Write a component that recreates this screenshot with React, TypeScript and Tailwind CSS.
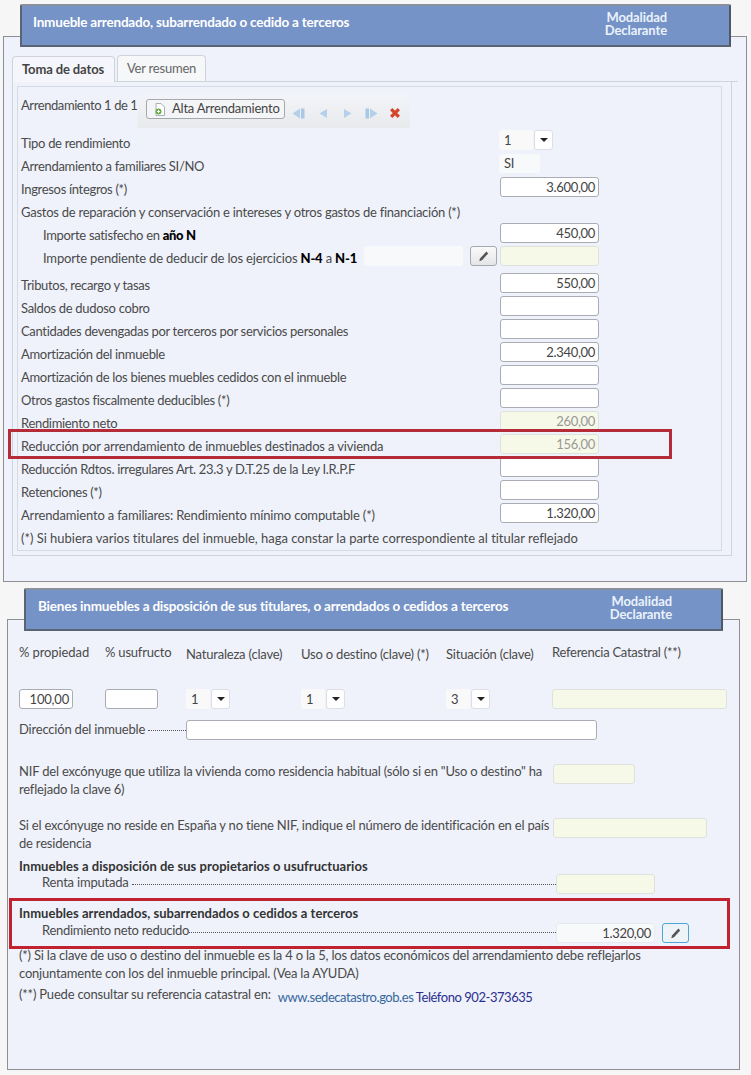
import React from "react";

const F = "font-['Lato','Noto_Sans',sans-serif]";

function Money({ v, tone = "white", w = "w-[99px]" }: { v?: string; tone?: "white" | "yellow" | "ro"; w?: string }) {
  const cls =
    tone === "white"
      ? "bg-white border-[#a9adb3] text-[#444]"
      : tone === "yellow"
      ? "bg-[#f6f8e8] border-[#dfe2dc] text-[#999]"
      : "bg-[#f8f9fb] border-[#e8eaef] text-[#444]";
  return (
    <div className={`${w} h-[20px] shrink-0 rounded-[3px] border ${cls} pr-[3px] text-right leading-[19px]`}>{v}</div>
  );
}

function Select({ v, left, right }: { v: string; left: string; right: string }) {
  return (
    <div className="flex h-[20px] shrink-0 gap-px">
      <div className={`${left} h-[20px] rounded-[2px] bg-[#f9f9fa] pl-[5px] leading-[20px] text-[#444]`}>{v}</div>
      <div className={`${right} flex h-[20px] items-center justify-center rounded-[3px] border border-[#dcdfe5] bg-white`}>
        <svg width="8" height="4" viewBox="0 0 8 4">
          <path d="M0 0h8L4 4z" fill="#222" />
        </svg>
      </div>
    </div>
  );
}

function Row({
  label,
  children,
  first,
  indent,
  top = "mt-[1px]",
  track = "",
}: {
  label: React.ReactNode;
  children?: React.ReactNode;
  first?: boolean;
  indent?: boolean;
  top?: string;
  track?: string;
}) {
  return (
    <div className={`flex h-[23px] items-start pl-[3px] ${indent ? "pl-[25px]" : ""}`}>
      <div className={`mt-[3px] flex-1 whitespace-nowrap leading-[20px] ${track}`}>{label}</div>
      <div className={`${first ? "" : top} w-[222px] shrink-0 ${first ? "pl-0" : "pl-px"}`}>{children}</div>
    </div>
  );
}

function Pencil({ dark = "#555" }: { dark?: string }) {
  return (
    <svg width="11" height="11" viewBox="0 0 11 11">
      <path d="M8.4 0.6l1.800 1.800-6.200 6.800L1.300 10.200l0.700-2.800z" fill={dark} />
    </svg>
  );
}

function Arrow({ dir, bar }: { dir: "l" | "r"; bar?: boolean }) {
  const flip = dir === "r" ? "-scale-x-100" : "";
  return (
    <svg width={bar ? 13 : 11} height="11" viewBox={bar ? "0 0 13 11" : "0 0 11 11"} className={flip}>
      {bar ? (
        <>
          <path d="M8 0.5v10L0.5 5.500z" fill="#b4d0ea" />
          <rect x="9" y="0.5" width="3.500" height="10" fill="#a9c8e6" />
        </>
      ) : (
        <path d="M9 1v9L1.500 5.500z" fill="#b4d0ea" />
      )}
    </svg>
  );
}

export default function App() {
  return (
    <div className={`h-[1075px] w-[751px] overflow-hidden bg-[#f6f6f6] pt-[4px] text-[13px] tracking-[-0.32px] text-[#4a4a4a] ${F}`}>
      {/* HEADER 1 */}
      <div className="relative z-10 ml-[20px] flex h-[43px] w-[711px] items-start justify-between rounded-t-[2px] border-2 border-[#5b6474] border-t-[#8a919c] border-r-[#4f5867] bg-[#7593c7] pl-[11px] pr-[62px] text-white">
        <div className="mt-[6px] text-[13.5px] font-bold leading-[20px] tracking-[-0.2px]">Inmueble arrendado, subarrendado o cedido a terceros</div>
        <div className="mt-[5px] text-right text-[13px] font-bold leading-[13px] tracking-[-0.1px] text-[#eaf2fb]">
          Modalidad
          <br />
          Declarante
        </div>
      </div>

      {/* PANEL 1 */}
      <div className="ml-[3px] mt-[-11px] h-[546px] w-[744px] border border-[#8c8f94] bg-[#eff2fa] pl-[8px] pt-[19px]">
        <div className="flex h-[26px] w-[726px] items-end gap-[2px] border-b border-[#cfd4dc] pl-0">
          <div className="mb-[-1px] h-[26px] w-[103px] rounded-t-[4px] border border-b-0 border-[#cfd4dc] bg-[#f4f6fb] pl-[9px] text-[13px] font-bold leading-[24px] tracking-[-0.12px] text-[#444]">Toma de datos</div>
          <div className="h-[26px] w-[89px] rounded-t-[4px] border border-b-0 border-[#cfd4dc] bg-[#f6f7f9] pl-[9px] leading-[25px] tracking-[-0.22px] text-[#666]">Ver resumen</div>
        </div>
        <div className="h-[474px] w-[720px] border-x border-b border-[#cfd4dc] pb-[4px] pl-[4px] pr-[8px] pt-[4px]">
          <div className="h-[465px] w-[705px] border border-[#d5dbe5]">
            <div className="flex h-[43px] items-start pl-[3px]">
              <div className="mt-[8px] w-[117px] whitespace-nowrap leading-[20px] tracking-[-0.42px]">Arrendamiento 1 de 1</div>
              <div className="mt-[8px] flex h-[33px] w-[272px] items-start bg-gradient-to-b from-[#f2f4f9] to-[#e9eaec] pl-[8px] pt-[4px]">
                <div className="flex h-[20px] w-[139px] items-center gap-[6px] whitespace-nowrap rounded-[3px] border border-[#a5a8ac] bg-[#f4f5f6] pl-[7px] tracking-[-0.22px] text-[#444]">
                  <svg width="12" height="13" viewBox="0 0 12 13" className="shrink-0">
                    <path d="M2 .5h5l3.500 3.500v8.500H2z" fill="#fff" stroke="#a8b0b8" />
                    <circle cx="4.500" cy="8.500" r="3" fill="#6aae47" />
                    <path d="M3 8.500h3M4.500 7v3" stroke="#fff" strokeWidth="1" />
                  </svg>
                  Alta Arrendamiento
                </div>
                <div className="ml-[7px] mt-[8px] flex items-center gap-[10px]">
                  <Arrow dir="l" bar />
                  <span className="ml-[3px]"><Arrow dir="l" /></span>
                  <span className="ml-[3px]"><Arrow dir="r" /></span>
                  <span className="ml-[2px]"><Arrow dir="r" bar /></span>
                  <svg width="12" height="12" viewBox="0 0 11 11" className="ml-[1px]">
                    <path d="M2 2l7 7M9 2l-7 7" stroke="#d5452c" strokeWidth="3" />
                  </svg>
                </div>
              </div>
            </div>

            <Row label="Tipo de rendimiento" first>
              <Select v="1" left="w-[34px]" right="w-[19px]" />
            </Row>
            <Row label="Arrendamiento a familiares SI/NO" first top="">
              <div className="mt-[1px] h-[19px] w-[41px] rounded-[3px] bg-[#f8f9fb] pl-[5px] leading-[19px] text-[#444]">SI</div>
            </Row>
            <Row label="Ingresos íntegros (*)"><Money v="3.600,00" /></Row>
            <Row track="tracking-[-0.25px]" label="Gastos de reparación y conservación e intereses y otros gastos de financiación (*)" />
            <Row indent label={<>Importe satisfecho en <b className="font-black text-black">año N</b></>}><Money v="450,00" /></Row>
            <div className="flex h-[27px] items-start pl-[25px]">
              <div className="mt-[3px] w-[321px] whitespace-nowrap leading-[20px] tracking-[-0.17px]">
                Importe pendiente de deducir de los ejercicios <b className="font-black text-black">N-4</b> a <b className="font-black text-black">N-1</b>
              </div>
              <div className="mt-px h-[20px] w-[99px] rounded-[3px] bg-[#f8f9fb]" />
              <div className="ml-[7px] mt-px flex h-[20px] w-[27px] items-center justify-center rounded-[3px] border border-[#a5a8ac] bg-gradient-to-b from-[#fafafa] to-[#e4e5e7]">
                <Pencil />
              </div>
              <div className="ml-[3px] mt-px"><Money tone="yellow" /></div>
            </div>
            <Row label="Tributos, recargo y tasas"><Money v="550,00" /></Row>
            <Row label="Saldos de dudoso cobro"><Money /></Row>
            <Row label="Cantidades devengadas por terceros por servicios personales"><Money /></Row>
            <Row label="Amortización del inmueble"><Money v="2.340,00" /></Row>
            <Row label="Amortización de los bienes muebles cedidos con el inmueble"><Money /></Row>
            <Row label="Otros gastos fiscalmente deducibles (*)"><Money /></Row>
            <Row label="Rendimiento neto"><Money v="260,00" tone="yellow" /></Row>
            <div className="relative">
              <Row track="tracking-[-0.16px]" label="Reducción por arrendamiento de inmuebles destinados a vivienda"><Money v="156,00" tone="yellow" /></Row>
              <div className="absolute left-[-10px] top-[-4px] z-10 h-[30px] w-[664px] border-[3px] border-[#b52c38]" />
            </div>
            <Row label="Reducción Rdtos. irregulares Art. 23.3 y D.T.25 de la Ley I.R.P.F"><Money /></Row>
            <Row label="Retenciones (*)"><Money /></Row>
            <Row track="tracking-[-0.16px]" label="Arrendamiento a familiares: Rendimiento mínimo computable (*)"><Money v="1.320,00" /></Row>
            <Row track="tracking-[-0.02px]" label="(*) Si hubiera varios titulares del inmueble, haga constar la parte correspondiente al titular reflejado" />
          </div>
        </div>
      </div>

      {/* HEADER 2 */}
      <div className="relative z-10 ml-[24px] mt-[6px] flex h-[43px] w-[699px] items-start justify-between rounded-t-[2px] border-2 border-[#5b6474] border-t-[#8a919c] border-r-[#4f5867] bg-[#7593c7] pl-[12px] pr-[49px] text-white">
        <div className="mt-[6px] text-[13.5px] font-bold leading-[20px] tracking-[-0.2px]">Bienes inmuebles a disposición de sus titulares, o arrendados o cedidos a terceros</div>
        <div className="mt-[5px] text-right text-[13px] font-bold leading-[13px] tracking-[-0.1px] text-[#eaf2fb]">
          Modalidad
          <br />
          Declarante
        </div>
      </div>

      {/* PANEL 2 */}
      <div className="ml-[7px] mt-[-12px] h-[451px] w-[733px] border border-[#8c8f94] bg-[#eff2fa] pl-[11px] tracking-[-0.2px]">
        <div className="pt-[22px]">
          <div className="grid grid-cols-[86px_81px_115px_145px_106px_175px] grid-rows-[47px_20px]">
            <div className="leading-[20px] tracking-[-0.1px]">% propiedad</div>
            <div className="leading-[20px]">% usufructo</div>
            <div className="mt-[2px] leading-[20px]">Naturaleza (clave)</div>
            <div className="mt-[2px] whitespace-nowrap leading-[20px]">Uso o destino (clave) (*)</div>
            <div className="mt-[2px] leading-[20px]">Situación (clave)</div>
            <div className="whitespace-nowrap leading-[20px] tracking-[-0.27px]">Referencia Catastral (**)</div>
            <Money v="100,00" w="w-[54px]" />
            <Money w="w-[53px]" />
            <Select v="1" left="w-[24px]" right="w-[19px]" />
            <Select v="1" left="w-[24px]" right="w-[19px]" />
            <Select v="3" left="w-[24px]" right="w-[19px]" />
            <Money tone="yellow" w="w-[175px]" />
          </div>

          <div className="mt-[11px] flex h-[20px] w-[578px] items-center">
            <div className="whitespace-nowrap">Dirección del inmueble</div>
            <div className="ml-[3px] flex-1 border-t border-dotted border-[#555]" />
            <Money w="w-[411px]" />
          </div>

          <div className="mt-[23px] flex h-[35px] items-start">
            <div className="w-[534px] leading-[17.5px]">NIF del excónyuge que utiliza la vivienda como residencia habitual (sólo si en "Uso o destino" ha reflejado la clave 6)</div>
            <div className="mt-px"><Money tone="yellow" w="w-[82px]" /></div>
          </div>

          <div className="mt-[19px] flex h-[35px] items-start">
            <div className="w-[534px] leading-[17.5px]">Si el excónyuge no reside en España y no tiene NIF, indique el número de identificación en el país de residencia</div>
            <div className="mt-px"><Money tone="yellow" w="w-[154px]" /></div>
          </div>

          <div className="mt-[6px] h-[16px] text-[13px] font-bold leading-[17px] tracking-[0.03px] text-[#333]">Inmuebles a disposición de sus propietarios o usufructuarios</div>
          <div className="flex h-[20px] w-[636px] items-center pl-[23px] tracking-[-0.2px]">
            <div className="mt-[-3px] whitespace-nowrap">Renta imputada</div>
            <div className="ml-[3px] flex-1 border-t border-dotted border-[#555]" />
            <Money tone="yellow" />
          </div>

          <div className="relative mt-[11px] h-[37px]">
            <div className="h-[18px] font-bold leading-[17px] tracking-[0.03px] text-[#333]">Inmuebles arrendados, subarrendados o cedidos a terceros</div>
            <div className="flex h-[20px] w-[670px] items-center pl-[23px] tracking-[-0.3px]">
              <div className="mt-[-4px] whitespace-nowrap">Rendimiento neto reducido</div>
              <div className="mt-[-2px] flex-1 border-t border-dotted border-[#555]" />
              <Money v="1.320,00" tone="ro" />
              <div className="ml-[7px] flex h-[20px] w-[27px] shrink-0 items-center justify-center rounded-[3px] border border-[#4ea6d6] bg-[#eef3f8]">
                <Pencil />
              </div>
            </div>
            <div className="absolute left-[-10px] top-[-7px] z-10 h-[51px] w-[721px] border-[3px] border-[#c0232f]" />
          </div>

          <div className="mt-[5px] leading-[17.5px]">
            (*) Si la clave de uso o destino del inmueble es la 4 o la 5, los datos económicos del arrendamiento debe reflejarlos
            <br />
            conjuntamente con los del inmueble principal. (Vea la AYUDA)
          </div>
          <div className="mt-[4px] flex items-start">
            <div className="leading-[17.5px]">(**) Puede consultar su referencia catastral en:</div>
            <div className="ml-[7px] mt-[3px] leading-[17.5px] tracking-[-0.45px]">
              <span className="text-[#36679d]">www.sedecatastro.gob.es</span> <span className="text-[#2b2f8f]">Teléfono 902-373635</span>
            </div>
          </div>
        </div>
      </div>
    </div>
  );
}
